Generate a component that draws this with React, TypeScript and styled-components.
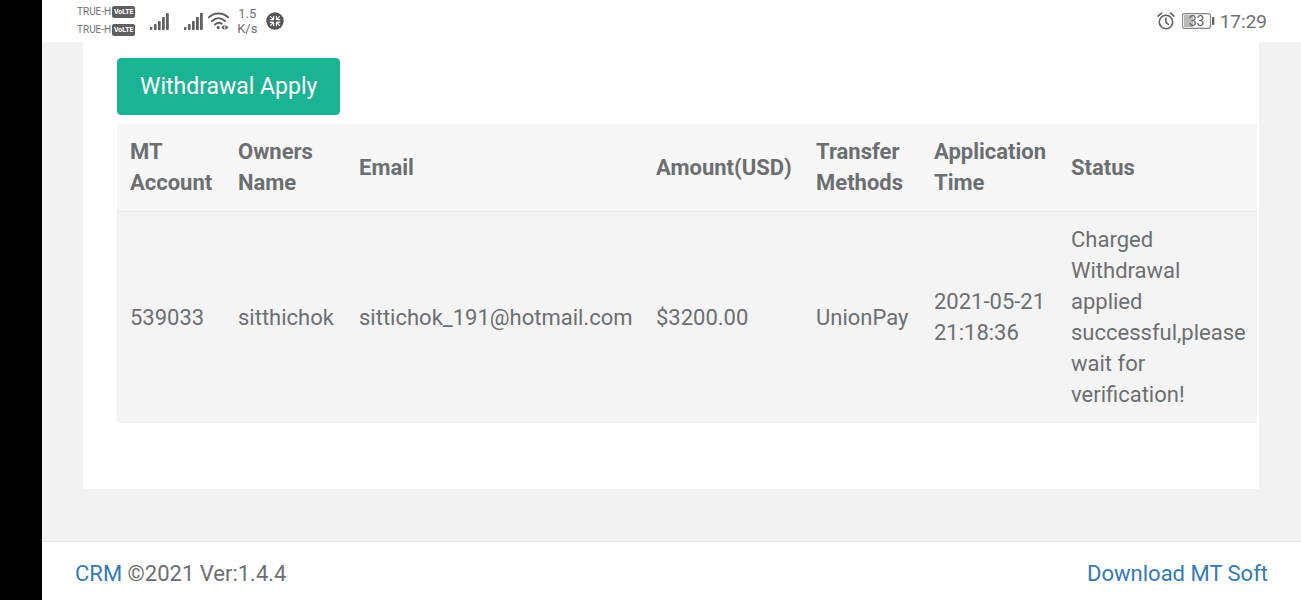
import React from "react";
import styled, { createGlobalStyle } from "styled-components";

const GlobalStyle = createGlobalStyle`
  * { box-sizing: border-box; }
  body {
    margin: 0;
    background: #f2f2f2;
    color: #6c6f71;
    font-family: Roboto, "Liberation Sans", sans-serif;
    font-size: 22px;
    line-height: 31px;
  }
`;

const Screen = styled.div`
  display: flex;
  flex-direction: column;
  min-height: 100vh;
  border-left: 42px solid #000;
`;

const StatusBar = styled.header`
  display: flex;
  align-items: center;
  justify-content: space-between;
  height: 42px;
  padding: 0 34px 0 35px;
  background: #fff;
  color: #6f6f6f;
`;

const StatusGroup = styled.div`
  display: flex;
  align-items: center;
`;

const Carriers = styled.div`
  display: flex;
  flex-direction: column;
  margin-right: 15px;
`;

const Carrier = styled.div`
  display: flex;
  align-items: center;
  gap: 1px;
  font-size: 10px;
  line-height: 18px;
`;

const Volte = styled.span`
  width: 23px;
  height: 12px;
  border-radius: 2px;
  background: #5f5f5f;
  color: #fff;
  font-size: 7px;
  font-weight: 700;
  line-height: 12px;
  text-align: center;
`;

const Speed = styled.div`
  margin: 0 9px 0 8px;
  font-size: 13px;
  line-height: 15px;
  text-align: center;
`;

const Clock = styled.time`
  margin-left: 5px;
  font-size: 19px;
`;

const SignalSvg = styled.svg<{ $gap: number }>`
  margin-right: ${(p) => p.$gap}px;
`;

const AlarmSvg = styled.svg`
  margin-right: 7px;
`;

const Content = styled.main`
  flex: 1;
  padding: 0 42px 52px 41px;
`;

const Panel = styled.section`
  min-height: 447px;
  padding: 16px 2px 66px 34px;
  background: #fff;
`;

const ApplyButton = styled.button`
  display: block;
  margin-bottom: 9px;
  padding: 13px 22px 12px;
  border: 1px solid #1ab394;
  border-radius: 4px;
  background: #1ab394;
  color: #fff;
  font: inherit;
  font-size: 23px;
  line-height: 30px;
`;

const Table = styled.table`
  width: 100%;
  table-layout: fixed;
  border-collapse: collapse;
  text-align: left;
`;

const Col = styled.col<{ $width?: number }>`
  width: ${(p) => (p.$width ? `${p.$width}px` : "auto")};
`;

const HeadCell = styled.th`
  padding: 12px 8px 13px 13px;
  border-bottom: 1px solid #e7e7e7;
  background: #f7f7f7;
  font-weight: 700;
`;

const Cell = styled.td`
  padding: 12px 8px 13px 13px;
  background: #f4f4f4;
`;

const Footer = styled.footer`
  display: flex;
  justify-content: space-between;
  padding: 16px 33px 12px;
  border-top: 1px solid #e7eaec;
  background: #fff;
`;

const Link = styled.a`
  color: #337ab7;
  text-decoration: none;
`;

const columns = [
  { title: "MT Account", width: 108, value: "539033" },
  { title: "Owners Name", width: 121, value: "sitthichok" },
  { title: "Email", width: 297, value: "sittichok_191@hotmail.com" },
  { title: "Amount(USD)", width: 160, value: "$3200.00" },
  { title: "Transfer Methods", width: 118, value: "UnionPay" },
  { title: "Application Time", width: 137, value: "2021-05-21 21:18:36" },
  {
    title: "Status",
    value: "Charged Withdrawal applied successful,please wait for verification!",
  },
];

const Signal = ({ gap }: { gap: number }) => (
  <SignalSvg $gap={gap} width="19" height="17" viewBox="0 0 19 17" fill="#606060" aria-hidden="true">
    <rect x="0" y="14" width="2.4" height="3" rx="0.8" />
    <rect x="4" y="11" width="2.6" height="6" rx="0.8" />
    <rect x="8" y="8" width="2.7" height="9" rx="0.8" />
    <rect x="12" y="4" width="2.8" height="13" rx="0.8" />
    <rect x="16" y="0" width="2.8" height="17" rx="0.8" />
  </SignalSvg>
);

const Wifi = () => (
  <svg width="21" height="18" viewBox="0 0 21 18" fill="none" stroke="#606060" strokeWidth="2" strokeLinecap="round" aria-hidden="true">
    <path d="M1 5.2C6.4.2 14.6.2 20 5.2M4 9C8 5.4 13 5.4 17 9M7 12.6C8.8 10.7 11.5 10.3 13.6 11.6" />
    <circle cx="10.2" cy="15.6" r="1.6" fill="#606060" stroke="none" />
    <path d="M16.4 12.8v5.2l-3.2-2.6zM17.4 12.8v5.2l3.2-2.6z" fill="#606060" stroke="none" />
  </svg>
);

const AppBadge = () => (
  <svg width="18" height="18" viewBox="0 0 18 18" fill="none" aria-hidden="true">
    <circle cx="9" cy="9" r="8.7" fill="#555" />
    <g stroke="#fff" strokeWidth="1.1" strokeLinecap="round" strokeLinejoin="round">
      <path d="M4.2 7.6h3.4V4.2M4.6 4.6l3 3M10.4 4.2v3.4h3.4M13.4 4.6l-3 3M4.2 10.4h3.4v3.4M4.6 13.4l3-3M13.8 10.4h-3.4v3.4M13.4 13.4l-3-3" />
    </g>
  </svg>
);

const Alarm = () => (
  <AlarmSvg width="18" height="18" viewBox="0 0 18 18" fill="none" stroke="#606060" strokeWidth="1.6" strokeLinecap="round" aria-hidden="true">
    <circle cx="9" cy="10" r="6.7" />
    <path d="M9 6.2v4.1l2.4 2M1 4.1L4.5 1.2M17 4.1l-3.5-2.9" />
  </AlarmSvg>
);

const Battery = () => (
  <svg width="33" height="16" viewBox="0 0 33 16" role="img" aria-label="Battery 33%">
    <rect x="0.6" y="0.6" width="27.8" height="14.8" rx="2" fill="#fff" stroke="#858585" strokeWidth="1.1" />
    <rect x="2" y="2" width="9" height="12" fill="#b9b9b9" />
    <rect x="30" y="4" width="2.3" height="8" rx="0.7" fill="#606060" />
    <text x="14.5" y="12.5" textAnchor="middle" fontSize="14" fill="#606060">33</text>
  </svg>
);

export default function App() {
  return (
    <Screen>
      <GlobalStyle />
      <StatusBar>
        <StatusGroup>
          <Carriers>
            <Carrier>TRUE-H <Volte>VoLTE</Volte></Carrier>
            <Carrier>TRUE-H <Volte>VoLTE</Volte></Carrier>
          </Carriers>
          <Signal gap={15} />
          <Signal gap={5} />
          <Wifi />
          <Speed>1.5<br />K/s</Speed>
          <AppBadge />
        </StatusGroup>
        <StatusGroup>
          <Alarm />
          <Battery />
          <Clock>17:29</Clock>
        </StatusGroup>
      </StatusBar>
      <Content>
        <Panel>
          <ApplyButton type="button">Withdrawal Apply</ApplyButton>
          <Table>
            <colgroup>
              {columns.map((c) => <Col key={c.title} $width={c.width} />)}
            </colgroup>
            <thead>
              <tr>{columns.map((c) => <HeadCell key={c.title} scope="col">{c.title}</HeadCell>)}</tr>
            </thead>
            <tbody>
              <tr>{columns.map((c) => <Cell key={c.title}>{c.value}</Cell>)}</tr>
            </tbody>
          </Table>
        </Panel>
      </Content>
      <Footer>
        <span><Link href="#crm">CRM</Link> ©2021 Ver:1.4.4</span>
        <Link href="#download">Download MT Soft</Link>
      </Footer>
    </Screen>
  );
}
